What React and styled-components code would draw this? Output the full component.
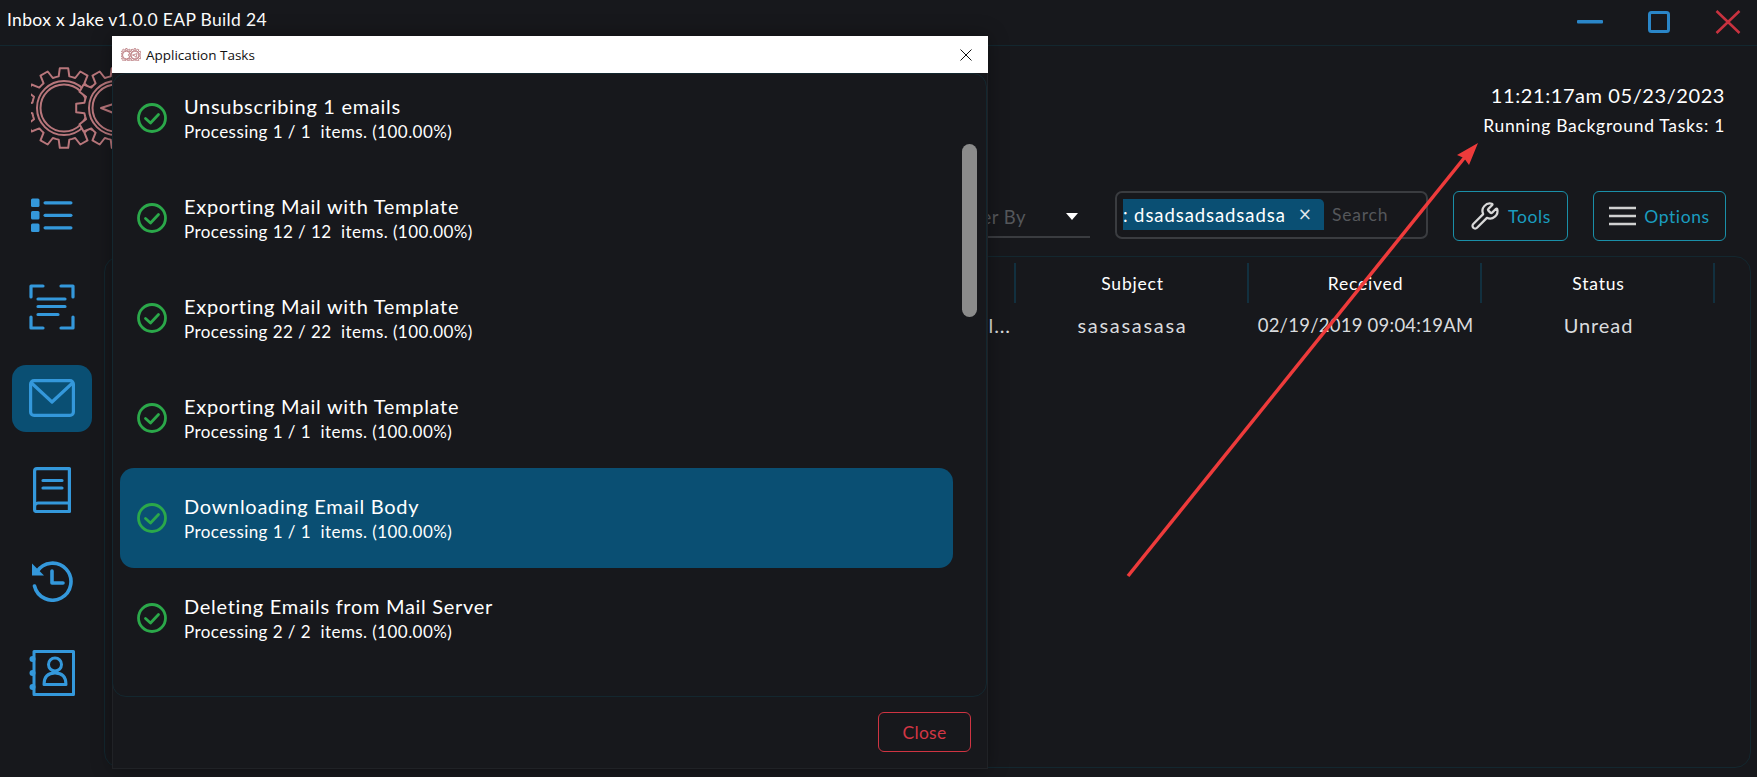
import React from 'react';
import styled, { createGlobalStyle } from 'styled-components';
import { Wrench } from 'lucide-react';

const FONT = `Lato, "Open Sans", sans-serif`;
const BG = '#17181c';
const LINE = '#13272f';
const BLUE = '#3498db';
const DEEP = '#0a4f73';

const Global = createGlobalStyle`
  html, body { margin: 0; padding: 0; height: 100%; background: ${BG}; overflow: hidden; }
  * { box-sizing: border-box; }
  body { font-family: ${FONT}; color: #fff; }
`;

const Shell = styled.div`
  position: relative;
  width: 1757px;
  height: 777px;
  display: flex;
  flex-direction: column;
  background: ${BG};
  overflow: hidden;
`;

const TitleBar = styled.header`
  height: 46px;
  flex: none;
  display: flex;
  align-items: center;
  justify-content: space-between;
  padding: 0 16px 6px 7px;
  border-bottom: 1px solid ${LINE};
`;
const AppTitle = styled.div`
  font-size: 17.5px;
  letter-spacing: 0.32px;
`;
const WindowControls = styled.div`
  display: flex;
  align-items: center;
  gap: 45px;
  margin-top: 4px;
`;

const Header = styled.div`
  height: 124px;
  flex: none;
  display: flex;
  align-items: flex-start;
  justify-content: space-between;
  padding: 19px 32px 0 31px;
`;
const Clock = styled.div`
  display: flex;
  flex-direction: column;
  align-items: flex-end;
  padding-top: 17px;
  gap: 7px;
`;
const Time = styled.div`
  font-size: 20px;
  line-height: 26px;
  letter-spacing: 0.58px;
`;
const Running = styled.div`
  font-size: 17.5px;
  line-height: 22px;
  letter-spacing: 0.7px;
`;

const Body = styled.div`
  flex: 1;
  display: flex;
  min-height: 0;
`;
const Sidebar = styled.nav`
  width: 104px;
  flex: none;
  display: flex;
  flex-direction: column;
  gap: 24.5px;
  padding: 11.5px 12px 0;
`;
const NavItem = styled.div`
  height: 67px;
  width: 80px;
  border-radius: 14px;
  display: flex;
  align-items: center;
  justify-content: center;
  background: ${p => (p.$active ? DEEP : 'transparent')};
`;

const Content = styled.main`
  flex: 1;
  display: flex;
  flex-direction: column;
  min-width: 0;
  padding: 21px 6px 9px 0;
  gap: 15px;
`;
const Toolbar = styled.div`
  display: flex;
  align-items: center;
  justify-content: flex-end;
  gap: 25px;
  padding-right: 25px;
  height: 50px;
`;
const FilterSelect = styled.div`
  width: 240px;
  height: 45px;
  margin-top: -1px;
  display: flex;
  align-items: center;
  justify-content: flex-end;
  gap: 40px;
  padding: 4px 12px 0 0;
  border-bottom: 2px solid #3a3c40;
  font-size: 18.5px;
  letter-spacing: 0.5px;
  color: #55575b;
`;
const Caret = styled.span`
  width: 0;
  height: 0;
  border-left: 6px solid transparent;
  border-right: 6px solid transparent;
  border-top: 7px solid #fff;
`;
const SearchBox = styled.div`
  width: 313px;
  height: 48px;
  margin-top: -2px;
  border: 2px solid #3a3c40;
  border-radius: 7px;
  display: flex;
  align-items: flex-start;
  padding: 6px 0 0 6px;
  gap: 8px;
`;
const Chip = styled.div`
  width: 201px;
  height: 31px;
  flex: none;
  background: ${DEEP};
  border-radius: 0 5px 0 0;
  display: flex;
  align-items: center;
  justify-content: flex-end;
  overflow: hidden;
  padding-right: 12px;
  gap: 12px;
  font-size: 18.5px;
  white-space: nowrap;
  letter-spacing: 0.92px;
`;
const ChipClose = styled.span`
  font-size: 17px;
  color: #dfe6ea;
  font-family: "DejaVu Sans", sans-serif;
  line-height: 1;
  letter-spacing: 0;
`;
const SearchHint = styled.span`
  font-size: 17.5px;
  line-height: 31px;
  color: #55575b;
  letter-spacing: 0.8px;
`;
const ActionButton = styled.button`
  width: ${p => p.$w}px;
  height: 50px;
  background: transparent;
  border: 1.5px solid #1a8fa8;
  border-radius: 6px;
  display: flex;
  align-items: center;
  justify-content: center;
  gap: 8px;
  padding: 0;
  font-family: ${FONT};
  font-size: 17.5px;
  letter-spacing: 0.6px;
  color: #1a9cbf;
`;

const TablePanel = styled.section`
  flex: 1;
  border: 1.5px solid ${LINE};
  border-radius: 16px;
  padding: 6px 35px 0 0;
`;
const TableGrid = styled.div`
  display: grid;
  grid-template-columns: 1fr 233px 233px 233px;
`;
const HeadCell = styled.div`
  height: 40px;
  display: flex;
  align-items: center;
  justify-content: center;
  padding-left: 2px;
  border-right: 2px solid #12303f;
  font-size: 17.5px;
  letter-spacing: 0.8px;
`;
const Cell = styled.div`
  height: 44px;
  display: flex;
  align-items: center;
  justify-content: ${p => (p.$end ? 'flex-end' : 'center')};
  padding-right: ${p => (p.$end ? '5px' : '0')};
  font-size: ${p => p.$size || 20}px;
  color: #d9dbde;
  letter-spacing: ${p => p.$track ?? 0.9}px;
  white-space: nowrap;
`;

const Modal = styled.div`
  position: absolute;
  left: 112px;
  top: 36px;
  width: 876px;
  height: 733px;
  display: flex;
  flex-direction: column;
  background: ${BG};
  border: 1px solid #202226;
  border-top: 0;
  box-shadow: 0 0 18px rgba(0, 0, 0, 0.35);
`;
const ModalTitle = styled.div`
  height: 37px;
  flex: none;
  background: #fff;
  margin: 0 -1px;
  display: flex;
  align-items: center;
  padding: 0 16px 0 9px;
  gap: 5px;
  color: #111;
  font-family: "Open Sans", sans-serif;
  font-size: 13.5px;
`;
const ModalTitleText = styled.span`
  flex: 1;
`;
const TaskPanel = styled.div`
  position: relative;
  height: 624px;
  flex: none;
  margin-left: -1px;
  border: 1.5px solid ${LINE};
  border-radius: 14px;
  overflow: hidden;
`;
const TaskList = styled.div`
  display: flex;
  flex-direction: column;
  margin-top: -6px;
  padding-left: 7px;
`;
const TaskRow = styled.div`
  width: 833px;
  height: 100px;
  flex: none;
  display: flex;
  align-items: center;
  gap: 17px;
  padding-left: 17px;
  border-radius: 14px;
  background: ${p => (p.$active ? DEEP : 'transparent')};
`;
const TaskText = styled.div`
  display: flex;
  flex-direction: column;
  gap: 3px;
`;
const TaskTitle = styled.div`
  font-size: 20px;
  line-height: 24px;
  letter-spacing: 0.7px;
`;
const TaskSub = styled.div`
  font-size: 17px;
  line-height: 22px;
  letter-spacing: 0.43px;
  white-space: pre;
`;
const ScrollThumb = styled.div`
  position: absolute;
  left: 849px;
  top: 70px;
  width: 15px;
  height: 173px;
  border-radius: 8px;
  background: #8b8b8b;
`;
const ModalFooter = styled.div`
  flex: 1;
  display: flex;
  justify-content: flex-end;
  padding: 15px 16px 0 0;
`;
const CloseButton = styled.button`
  width: 93px;
  height: 40px;
  background: transparent;
  border: 1.5px solid #cf3442;
  border-radius: 6px;
  color: #d23644;
  font-family: ${FONT};
  font-size: 17.5px;
  letter-spacing: 0.3px;
`;
const ArrowLayer = styled.svg`
  position: absolute;
  left: 0;
  top: 0;
  pointer-events: none;
`;

const gearPath = (cx, cy, ro, ri, teeth) => {
  const pts = [];
  const step = (Math.PI * 2) / teeth;
  for (let i = 0; i < teeth; i++) {
    const a = i * step - Math.PI / 2;
    const seq = [
      [ri, -0.5],
      [ri, -0.32],
      [ro, -0.2],
      [ro, 0.2],
      [ri, 0.32],
    ];
    seq.forEach(([r, f]) => {
      const t = a + f * step;
      pts.push(`${(cx + r * Math.cos(t)).toFixed(1)} ${(cy + r * Math.sin(t)).toFixed(1)}`);
    });
  }
  return `M${pts.join('L')}Z`;
};

const Logo = ({ width, weight = 2, cover = BG }) => (
  <svg width={width} viewBox="0 0 122 84" fill="none" stroke="#b8767b" strokeWidth={weight} strokeLinejoin="round">
    <path d={gearPath(33, 43, 40, 32, 12)} />
    <circle cx="33" cy="43" r="27" />
    <circle cx="33" cy="43" r="23.5" />
    <path d={gearPath(85, 43, 40, 32, 12)} fill={cover} />
    <circle cx="85" cy="43" r="27" />
    <circle cx="85" cy="43" r="23.5" />
    <path d="M70 43l28-9-6 24-7-9z" />
  </svg>
);

const ListIcon = () => (
  <svg width="42" height="35" viewBox="0 0 42 35" fill={BLUE}>
    <rect x="0" y="0.500" width="8.500" height="8.500" rx="1.500" />
    <rect x="0" y="13" width="8.500" height="8.500" rx="1.500" />
    <rect x="0" y="25.500" width="8.500" height="8.500" rx="1.500" />
    <rect x="12.500" y="3.200" width="29" height="3.200" rx="1.600" />
    <rect x="12.500" y="15.700" width="29" height="3.200" rx="1.600" />
    <rect x="12.500" y="28.200" width="29" height="3.200" rx="1.600" />
  </svg>
);
const ScanIcon = () => (
  <svg width="46" height="46" viewBox="0 0 46 46" fill="none" stroke={BLUE} strokeWidth="3.200" strokeLinecap="round" strokeLinejoin="round">
    <path d="M2 13V2h12M32 2h12v11M2 33v11h12M32 44h12V33" />
    <path d="M9 15h27M9 22.500h27M9 30.500h20" />
  </svg>
);
const MailIcon = () => (
  <svg width="46" height="38" viewBox="0 0 46 38" fill="none" stroke={BLUE} strokeWidth="3.200" strokeLinejoin="round">
    <rect x="1.600" y="1.600" width="42.800" height="34.800" rx="3.500" />
    <path d="M2.500 4L23 23 43.500 4" strokeLinecap="round" />
  </svg>
);
const BookIcon = () => (
  <svg width="38" height="46" viewBox="0 0 38 46" fill="none" stroke={BLUE} strokeWidth="3.200" strokeLinejoin="round">
    <path d="M36.400 36H5a3.500 3.500 0 0 0-3.400 3.500v3a2 2 0 0 0 2 2H36.400V1.600H4a2.400 2.400 0 0 0-2.400 2.400V39" />
    <path d="M10 13.500h19M10 21h19" strokeLinecap="round" />
  </svg>
);
const HistoryIcon = () => (
  <svg width="42" height="42" viewBox="0 0 42 42" fill="none" stroke={BLUE} strokeWidth="3.600" strokeLinecap="round" strokeLinejoin="round">
    <path d="M6 11.500A18.500 18.500 0 1 1 3.500 26" />
    <path d="M1 3.500v12h12z" fill={BLUE} stroke="none" />
    <path d="M21 11v12h11" />
  </svg>
);
const ContactIcon = () => (
  <svg width="46" height="46" viewBox="0 0 46 46" fill="none" stroke={BLUE} strokeWidth="3" strokeLinejoin="round">
    <path d="M5 1.500h39.500v43H5z" />
    <circle cx="3.500" cy="9" r="3" fill={BLUE} stroke="none" />
    <circle cx="3.500" cy="23" r="3" fill={BLUE} stroke="none" />
    <circle cx="3.500" cy="37" r="3" fill={BLUE} stroke="none" />
    <circle cx="26" cy="14.500" r="6.500" />
    <path d="M15 34.500c0-8 4-11.500 11-11.500s11 3.500 11 11.500z" />
  </svg>
);
const CheckIcon = () => (
  <svg width="30" height="30" viewBox="0 0 30 30" fill="none" stroke="#2ba84a" strokeWidth="2.800" strokeLinecap="round" strokeLinejoin="round">
    <circle cx="15" cy="15" r="13.500" />
    <path d="M8.500 15.500l5 4.500 8-8.500" />
  </svg>
);

const tasks = [
  ['Unsubscribing 1 emails', 'Processing 1 / 1  items. (100.00%)'],
  ['Exporting Mail with Template', 'Processing 12 / 12  items. (100.00%)'],
  ['Exporting Mail with Template', 'Processing 22 / 22  items. (100.00%)'],
  ['Exporting Mail with Template', 'Processing 1 / 1  items. (100.00%)'],
  ['Downloading Email Body', 'Processing 1 / 1  items. (100.00%)', true],
  ['Deleting Emails from Mail Server', 'Processing 2 / 2  items. (100.00%)'],
];

export default function App() {
  return (
    <Shell>
      <Global />
      <TitleBar>
        <AppTitle>Inbox x Jake v1.0.0 EAP Build 24</AppTitle>
        <WindowControls>
          <svg width="26" height="4"><rect width="26" height="3.500" rx="1" fill="#2a86c8" /></svg>
          <svg width="22" height="22" fill="none" stroke="#2a86c8" strokeWidth="3"><rect x="1.500" y="1.500" width="19" height="19" rx="2" /></svg>
          <svg width="26" height="24" fill="none" stroke="#c8323f" strokeWidth="2.500"><path d="M1.500 1l23 22M24.500 1l-23 22" /></svg>
        </WindowControls>
      </TitleBar>
      <Header>
        <Logo width={122} />
        <Clock>
          <Time>11:21:17am 05/23/2023</Time>
          <Running>Running Background Tasks: 1</Running>
        </Clock>
      </Header>
      <Body>
        <Sidebar>
          <NavItem><ListIcon /></NavItem>
          <NavItem><ScanIcon /></NavItem>
          <NavItem $active><MailIcon /></NavItem>
          <NavItem><BookIcon /></NavItem>
          <NavItem><HistoryIcon /></NavItem>
          <NavItem><ContactIcon /></NavItem>
        </Sidebar>
        <Content>
          <Toolbar>
            <FilterSelect>Filter By<Caret /></FilterSelect>
            <SearchBox>
              <Chip>Subject Filtering: dsadsadsadsadsa<ChipClose>×</ChipClose></Chip>
              <SearchHint>Search</SearchHint>
            </SearchBox>
            <ActionButton $w={115}>
              <Wrench size={30} color="#d8d8d8" strokeWidth={1.800} />
              Tools
            </ActionButton>
            <ActionButton $w={133}>
              <svg width="27" height="20" fill="none" stroke="#d0d0d0" strokeWidth="2.600"><path d="M0 2h27M0 10h27M0 18h27" /></svg>
              Options
            </ActionButton>
          </Toolbar>
          <TablePanel>
            <TableGrid>
              <HeadCell />
              <HeadCell>Subject</HeadCell>
              <HeadCell>Received</HeadCell>
              <HeadCell>Status</HeadCell>
              <Cell $end>ll...</Cell>
              <Cell $track={1.7}>sasasasasa</Cell>
              <Cell $size={18.5} $track={0.24}>02/19/2019 09:04:19AM</Cell>
              <Cell>Unread</Cell>
            </TableGrid>
          </TablePanel>
        </Content>
      </Body>
      <Modal>
        <ModalTitle>
          <Logo width={20} weight={5} cover="#fff" />
          <ModalTitleText>Application Tasks</ModalTitleText>
          <svg width="12" height="12" fill="none" stroke="#111" strokeWidth="1"><path d="M.5.500l11 11M11.500.500l-11 11" /></svg>
        </ModalTitle>
        <TaskPanel>
          <TaskList>
            {tasks.map(([title, sub, active], i) => (
              <TaskRow key={i} $active={active}>
                <CheckIcon />
                <TaskText>
                  <TaskTitle>{title}</TaskTitle>
                  <TaskSub>{sub}</TaskSub>
                </TaskText>
              </TaskRow>
            ))}
          </TaskList>
          <ScrollThumb />
        </TaskPanel>
        <ModalFooter>
          <CloseButton>Close</CloseButton>
        </ModalFooter>
      </Modal>
      <ArrowLayer width="1757" height="777" fill="none">
        <path d="M1128 576L1465 157" stroke="#ee3b3b" strokeWidth="3.500" />
        <path d="M1478 143L1457 155 1464 158 1469 165z" fill="#ee3b3b" />
      </ArrowLayer>
    </Shell>
  );
}
